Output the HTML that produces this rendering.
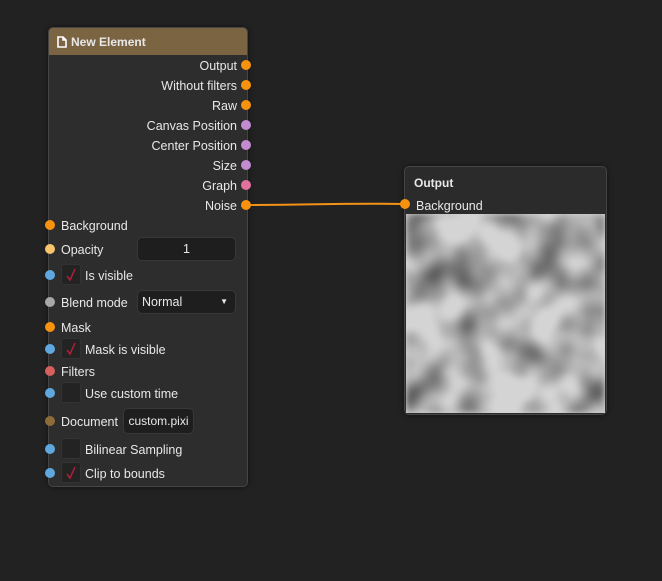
<!DOCTYPE html>
<html><head><style>
body{margin:0;width:662px;height:581px;background:#222222;position:relative;overflow:hidden;font-family:"Liberation Sans",sans-serif;font-size:12.5px;color:#e8e8e8}
.node{position:absolute;background:#2d2d2d;border:1px solid #454545;border-radius:5px;box-shadow:0 0 6px rgba(0,0,0,.5)}
.hdr{position:absolute;left:0;right:0;top:0;height:27px;background:#7a6441;border-radius:4px 4px 0 0;font-weight:bold;font-size:12px;line-height:29px}
.t{position:absolute;white-space:nowrap;line-height:16px}
.r{text-align:right}
.d{position:absolute;width:10px;height:10px;border-radius:50%}
.box{position:absolute;background:#1e1e1e;border:1px solid #383838;border-radius:5px;line-height:22px}
.cb{position:absolute;width:18px;height:19px;background:#232323;border:1px solid #333;border-radius:3px}
.cb svg{position:absolute;left:3px;top:3px}
</style></head><body>
<svg style="position:absolute;left:0;top:0" width="662" height="581">
<path d="M246 205 C320 205,330 203,405 204" stroke="#f29318" stroke-width="2" fill="none"/>
</svg>
<div class="node" style="left:48px;top:27px;width:198px;height:458px">
<div class="hdr"><svg style="position:absolute;left:8px;top:8px" width="10" height="12" viewBox="0 0 10 12"><path d="M1 1H6L9 4V11H1Z M6 1V4H9" fill="none" stroke="#fff" stroke-width="1.6"/></svg><span style="position:absolute;left:22px">New Element</span></div>
</div>
<div class="t r" style="right:425px;top:58px">Output</div>
<div class="t r" style="right:425px;top:78px">Without filters</div>
<div class="t r" style="right:425px;top:98px">Raw</div>
<div class="t r" style="right:425px;top:118px">Canvas Position</div>
<div class="t r" style="right:425px;top:138px">Center Position</div>
<div class="t r" style="right:425px;top:158px">Size</div>
<div class="t r" style="right:425px;top:178px">Graph</div>
<div class="t r" style="right:425px;top:198px">Noise</div>
<div class="d" style="left:241px;top:60px;background:#f7920f"></div>
<div class="d" style="left:241px;top:80px;background:#f7920f"></div>
<div class="d" style="left:241px;top:100px;background:#f7920f"></div>
<div class="d" style="left:241px;top:120px;background:#c48bd0"></div>
<div class="d" style="left:241px;top:140px;background:#c48bd0"></div>
<div class="d" style="left:241px;top:160px;background:#c48bd0"></div>
<div class="d" style="left:241px;top:180px;background:#e3719d"></div>
<div class="d" style="left:241px;top:200px;background:#f7920f"></div>

<div class="d" style="left:45px;top:220px;background:#f7920f"></div><div class="t" style="left:61px;top:218px">Background</div>
<div class="d" style="left:45px;top:244px;background:#f8c46b"></div><div class="t" style="left:61px;top:242px">Opacity</div>
<div class="box" style="left:137px;top:237px;width:97px;height:22px;text-align:center">1</div>
<div class="d" style="left:45px;top:270px;background:#5fa8df"></div>
<div class="cb" style="left:61px;top:264px"><svg width="12" height="14"><path d="M2 8L5 12L10 1" stroke="#b0203a" stroke-width="1.5" fill="none"/></svg></div><div class="t" style="left:85px;top:268px">Is visible</div>
<div class="d" style="left:45px;top:297px;background:#a8a8a8"></div><div class="t" style="left:61px;top:295px">Blend mode</div>
<div class="box" style="left:137px;top:290px;width:97px;height:22px"><span style="position:absolute;left:4px">Normal</span><span style="position:absolute;right:7px;top:0;font-size:8px">▼</span></div>
<div class="d" style="left:45px;top:322px;background:#f7920f"></div><div class="t" style="left:61px;top:320px">Mask</div>
<div class="d" style="left:45px;top:344px;background:#5fa8df"></div>
<div class="cb" style="left:61px;top:338px"><svg width="12" height="14"><path d="M2 8L5 12L10 1" stroke="#b0203a" stroke-width="1.5" fill="none"/></svg></div><div class="t" style="left:85px;top:342px">Mask is visible</div>
<div class="d" style="left:45px;top:366px;background:#d5605d"></div><div class="t" style="left:61px;top:364px">Filters</div>
<div class="d" style="left:45px;top:388px;background:#5fa8df"></div>
<div class="cb" style="left:61px;top:382px"></div><div class="t" style="left:85px;top:386px">Use custom time</div>
<div class="d" style="left:45px;top:416px;background:#8e6c38"></div><div class="t" style="left:61px;top:414px">Document</div>
<div class="box" style="left:123px;top:408px;width:69px;height:24px;line-height:24px;text-align:center;font-size:12px">custom.pixi</div>
<div class="d" style="left:45px;top:444px;background:#5fa8df"></div>
<div class="cb" style="left:61px;top:438px"></div><div class="t" style="left:85px;top:442px">Bilinear Sampling</div>
<div class="d" style="left:45px;top:468px;background:#5fa8df"></div>
<div class="cb" style="left:61px;top:462px"><svg width="12" height="14"><path d="M2 8L5 12L10 1" stroke="#b0203a" stroke-width="1.5" fill="none"/></svg></div><div class="t" style="left:85px;top:466px">Clip to bounds</div>

<div class="node" style="left:404px;top:166px;width:201px;height:247px;background:#2b2b2b;overflow:hidden">
<div class="t" style="left:9px;top:8px;font-weight:bold;font-size:12px">Output</div>
<div class="t" style="left:11px;top:31px">Background</div>
<svg style="position:absolute;left:1px;top:47px" width="199" height="199">
<filter id="n" x="0" y="0" width="100%" height="100%"><feTurbulence type="fractalNoise" baseFrequency="0.025" numOctaves="2" seed="11"/><feColorMatrix type="matrix" values="0 0 0 0 0 0 0 0 0 0 0 0 0 0 0 1.6 0 0 0 -0.6"/><feGaussianBlur stdDeviation="3"/></filter>
<rect width="199" height="199" fill="#d4d4d4"/>
<rect width="199" height="199" fill="#707070" filter="url(#n)" opacity="0.8"/>
</svg>
</div>
<div class="d" style="left:400px;top:199px;background:#f7920f"></div>
</body></html>
